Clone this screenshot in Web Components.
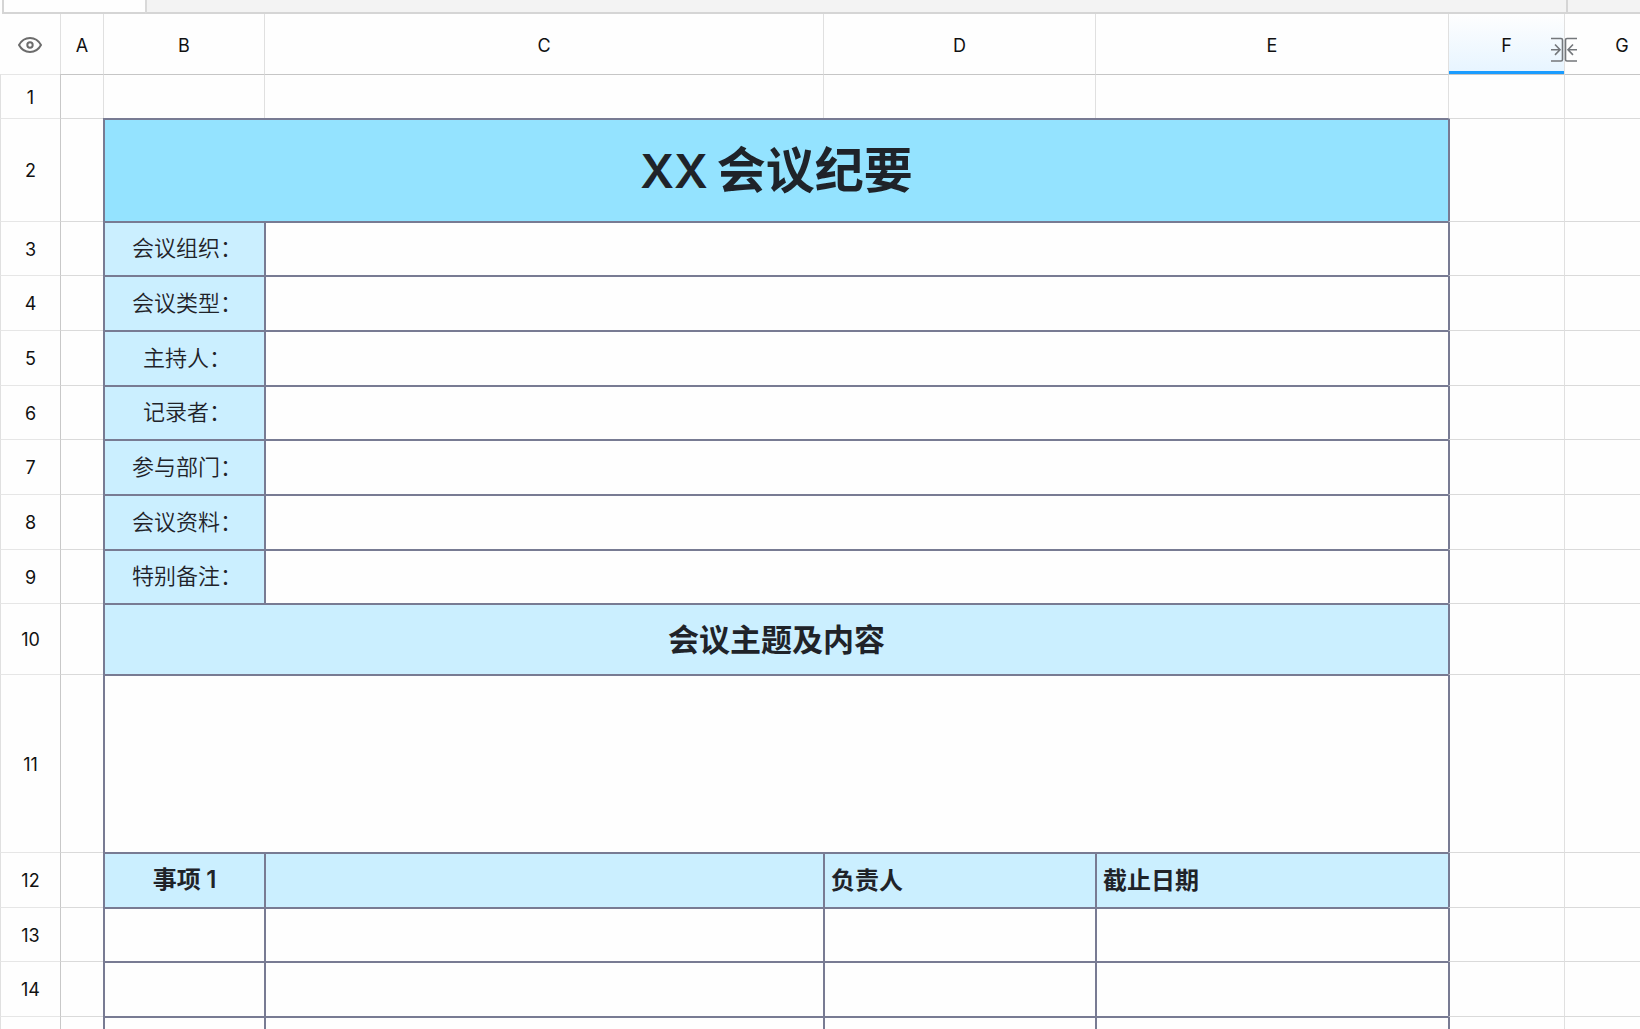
<!DOCTYPE html>
<html lang="zh-CN">
<head>
<meta charset="utf-8">
<title>XX 会议纪要</title>
<style>
  html, body { height: 100%; margin: 0; }
  body { overflow: hidden; background: #fefefe; }
</style>
</head>
<body>
<sheet-app>
  <sheet-strip></sheet-strip>
  <sheet-grid></sheet-grid>
</sheet-app>

<script>
class SheetApp extends HTMLElement {
  constructor() {
    super();
    this.attachShadow({ mode: 'open' }).innerHTML = `
      <style>
        :host {
          display: flex; flex-direction: column; height: 100%; overflow: hidden;
          font-family: Inter, "Noto Sans CJK SC", sans-serif;
          font-size: 18px; line-height: 24px; color: #1f2329;
        }
      </style>
      <slot></slot>`;
  }
}

class SheetStrip extends HTMLElement {
  constructor() {
    super();
    this.attachShadow({ mode: 'open' }).innerHTML = `
      <style>
        :host { display: flex; flex: none; height: 14px; padding-left: 2px; box-sizing: border-box; }
        div { box-sizing: border-box; border-bottom: 2px solid #d5d5d5; background: #f3f3f3; }
        .name { width: 143px; border-left: 2px solid #d5d5d5; background: #fefefe; }
        .bar { flex: 1; border-left: 2px solid #d9d9d9; }
        .end { width: 74px; border-left: 2px solid #d5d5d5; }
      </style>
      <div class="name"></div><div class="bar"></div><div class="end"></div>`;
  }
}

class EyeIcon extends HTMLElement {
  constructor() {
    super();
    this.attachShadow({ mode: 'open' }).innerHTML = `
      <style>:host { display: block; } svg { display: block; margin: 0 auto; }</style>
      <svg width="26" height="18" viewBox="0 0 26 18" fill="none" stroke="#6c6c6c" stroke-width="2" stroke-linejoin="round" aria-hidden="true">
        <path d="M2 9C4.500 4.400 8.500 2 13 2S21.500 4.400 24 9C21.500 13.600 17.500 16 13 16S4.500 13.600 2 9Z"/>
        <circle cx="13" cy="9" r="2.700"/>
      </svg>`;
  }
}

class ResizeMark extends HTMLElement {
  constructor() {
    super();
    this.attachShadow({ mode: 'open' }).innerHTML = `
      <style>:host { display: block; } svg { display: block; }</style>
      <svg width="28" height="26" viewBox="0 0 28 26" fill="none" stroke="#74777b" stroke-width="1.600" aria-hidden="true">
        <path d="M1 1.500H11Q12.500 1.500 12.500 3V22.500Q12.500 24 11 24H1"/>
        <path d="M27 1.500H17Q15.500 1.500 15.500 3V22.500Q15.500 24 17 24H27"/>
        <path d="M1 12.700H10M5 7.500L10 12.700L5 17.900M27 12.700H18M23 7.500L18 12.700L23 17.900"/>
      </svg>`;
  }
}

class SheetGrid extends HTMLElement {
  constructor() {
    super();
    const label = (n, h, text) => ({ n, h, cells: [['label', text, 1], ['box', '', 3]] });
    const blank = (n, h) => ({ n, h, cells: [['box', '', 1], ['box', '', 1], ['box', '', 1], ['box', '', 1]] });
    const rows = [
      { n: 1, h: 44, cells: [['', '', 1], ['', '', 1], ['', '', 1], ['', '', 1]], plain: true },
      { n: 2, h: 103, cells: [['title', '<div class="words"><span>XX </span><b>会议纪要</b></div>', 4]] },
      label(3, 54, '会议组织：'),
      label(4, 55, '会议类型：'),
      label(5, 55, '主持人：'),
      label(6, 54, '记录者：'),
      label(7, 55, '参与部门：'),
      label(8, 55, '会议资料：'),
      label(9, 54, '特别备注：'),
      { n: 10, h: 71, cells: [['section', '会议主题及内容', 4]] },
      { n: 11, h: 178, cells: [['box', '', 4]] },
      { n: 12, h: 55, cells: [['head mid', '事项 <span>1</span>', 1], ['head', '', 1], ['head', '负责人', 1], ['head', '截止日期', 1]] },
      blank(13, 54), blank(14, 55), blank('', 55)
    ];
    const body = rows.map(r => `
      <tr style="height:${r.h}px"><th scope="row">${r.n}</th><td class="first"></td>${
        r.cells.map(([c, t, s]) => `<td class="${c}" colspan="${s}">${t}</td>`).join('')
      }<td${r.plain ? '' : ' class="after"'}></td><td></td></tr>`).join('');
    this.attachShadow({ mode: 'open' }).innerHTML = `
      <style>
        :host { display: block; flex: 1; min-height: 0; overflow: hidden; }
        table {
          --line: #e0e0e0; --ink: #787b93;
          width: calc(100% + 39px); table-layout: fixed;
          border-collapse: separate; border-spacing: 0;
        }
        th, td { box-sizing: border-box; padding: 0; vertical-align: middle; }
        th { padding-top: 2px; font-weight: 400; color: #111; text-align: center; border-left: 1px solid var(--line); }
        thead th { height: 60px; }
        thead th[scope] { padding-top: 4px; }
        thead th:first-child { border-left: 0; }
        tbody th { border-top: 1px solid #e6e6e6; }
        td { border-top: 1px solid #dadada; border-left: 1px solid var(--line); }
        tbody tr:first-child td { border-top-color: #c6c6c6; }
        td.first { border-left-color: #c8c8c8; }
        .label, .box, .title, .section, .head { border-top: 2px solid var(--ink); border-left: 2px solid var(--ink); }
        .after { border-left: 2px solid var(--ink); }
        .label, .section, .head { background: #cbefff; }
        .label { padding: 0 0 2px 5px; font-size: 22px; line-height: 32px; text-align: center; font-weight: 350; }
        .title, .section, .head { font-family: "Noto Sans CJK SC", sans-serif; font-weight: 600; padding-bottom: 4px; }
        .title { background: #94e3ff; font-size: 48px; line-height: 64px; }
        .words { display: flex; justify-content: center; align-items: baseline; gap: 9px; }
        .words span { font-size: 47px; }
        .words b { font-weight: 600; font-size: 49px; }
        .section { font-size: 31px; line-height: 40px; text-align: center; }
        .head { font-size: 24px; line-height: 32px; padding-left: 6px; }
        .mid { padding-left: 0; text-align: center; }
        span { font-family: Inter, sans-serif; }
        .active { position: relative; background: linear-gradient(#fefefe, #e6f4ff); box-shadow: inset 0 -3px #1a9cff; }
        resize-mark { position: absolute; z-index: 1; right: -14px; top: 23px; }
      </style>
      <table>
        <colgroup>
          <col style="width:60px"><col style="width:43px"><col style="width:161px"><col>
          <col style="width:272px"><col style="width:353px"><col style="width:116px"><col style="width:115px">
        </colgroup>
        <thead><tr>
          <th><eye-icon></eye-icon></th>
          <th scope="col">A</th><th scope="col">B</th><th scope="col">C</th><th scope="col">D</th><th scope="col">E</th>
          <th scope="col" class="active">F<resize-mark></resize-mark></th>
          <th scope="col">G</th>
        </tr></thead>
        <tbody>${body}</tbody>
      </table>`;
  }
}

customElements.define('eye-icon', EyeIcon);
customElements.define('resize-mark', ResizeMark);
customElements.define('sheet-strip', SheetStrip);
customElements.define('sheet-grid', SheetGrid);
customElements.define('sheet-app', SheetApp);
</script>
</body>
</html>
